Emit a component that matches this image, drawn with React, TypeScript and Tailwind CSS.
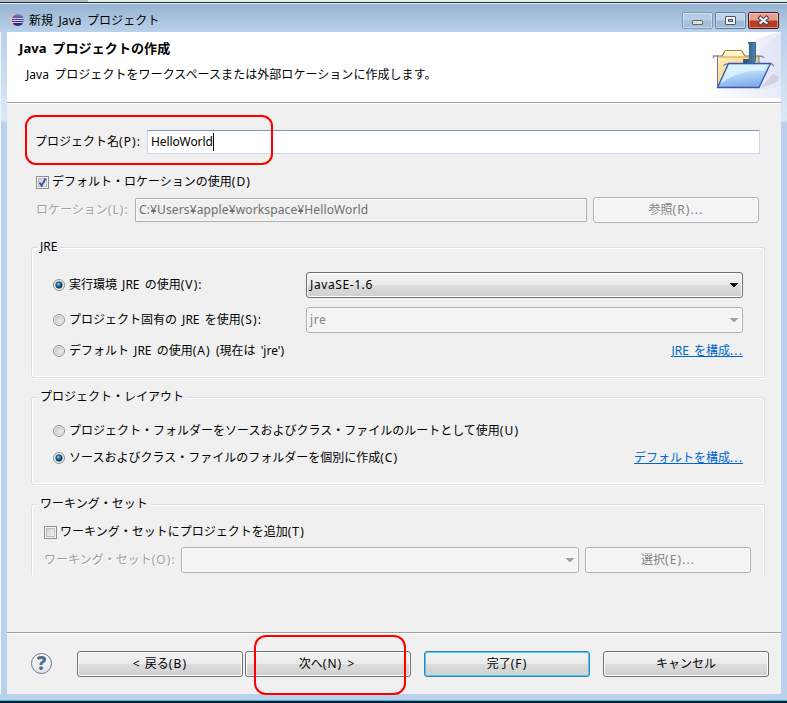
import type { ReactNode } from 'react';
import clsx from 'clsx';

function EclipseIcon() {
  return (
    <svg width="14" height="14" viewBox="0 0 14 14" className="shrink-0">
      <defs>
        <linearGradient id="ball" x1="0" y1="0" x2="0" y2="1">
          <stop offset="0" stopColor="#8a86c4" />
          <stop offset="0.5" stopColor="#3a3488" />
          <stop offset="1" stopColor="#2b2370" />
        </linearGradient>
      </defs>
      <ellipse cx="5.5" cy="7" rx="5.5" ry="6" fill="#e6b9b4" />
      <circle cx="7.8" cy="7" r="6.1" fill="url(#ball)" />
      <path d="M2 5.500h11.800M1.500 7.500h12.400M2 9.500h11.500" stroke="#e6e3f8" strokeWidth="0.900" />
    </svg>
  );
}

function CaptionButton({ kind }: { kind: 'min' | 'max' | 'close' }) {
  return (
    <div
      className={clsx(
        'h-[17px] w-[31px] rounded-[2px] border',
        kind === 'close'
          ? 'border-[#4a1420] bg-linear-to-b from-[#e6a08f] from-45% to-[#b83a22] to-55%'
          : kind === 'max'
            ? 'border-[#5f7a99] bg-linear-to-b from-[#bfd3e8] from-45% to-[#9fbbd8] to-55%'
            : 'border-[#7d98b6] bg-linear-to-b from-[#b5cce4] from-45% to-[#a4c0dd] to-55%',
      )}
    >
      <svg width="29" height="15" viewBox="0 0 29 15" className="block rounded-[1px] shadow-[inset_0_0_0_1px_rgba(255,255,255,0.4)]">
        {kind === 'min' && <rect x="9.5" y="7.5" width="10" height="4" rx="0.5" fill="#e3e0d8" stroke="#5f6670" />}
        {kind === 'max' && (
          <>
            <rect x="9.5" y="3.5" width="10" height="8" rx="0.5" fill="#f4f4f4" stroke="#4e5866" />
            <rect x="12.5" y="6.5" width="4" height="2" fill="#9fbbd8" stroke="#4e5866" />
          </>
        )}
        {kind === 'close' && (
          <>
            <path d="M11.5 5l6 5M17.5 5l-6 5" stroke="#4b3f4a" strokeWidth="4.2" strokeLinecap="square" />
            <path d="M11.5 5l6 5M17.5 5l-6 5" stroke="#f4f2f2" strokeWidth="2.200" strokeLinecap="square" />
          </>
        )}
      </svg>
    </div>
  );
}

function FolderBanner() {
  return (
    <svg width="75" height="66" viewBox="706 32 75 66" className="block">
      <defs>
        <linearGradient id="sky" x1="0" y1="0" x2="1" y2="0">
          <stop offset="0" stopColor="#fff" />
          <stop offset="1" stopColor="#dfe4f6" />
        </linearGradient>
        <linearGradient id="front" x1="0" y1="0" x2="0.3" y2="1">
          <stop offset="0" stopColor="#c9ecfd" />
          <stop offset="0.45" stopColor="#b9dffb" />
          <stop offset="1" stopColor="#83aeeb" />
        </linearGradient>
        <linearGradient id="back" x1="0" y1="0" x2="1" y2="1">
          <stop offset="0" stopColor="#fff3c6" />
          <stop offset="1" stopColor="#edbf62" />
        </linearGradient>
        <linearGradient id="jay" x1="0" y1="0" x2="1" y2="0">
          <stop offset="0" stopColor="#1f4d79" />
          <stop offset="1" stopColor="#4d87b0" />
        </linearGradient>
      </defs>
      <path d="M706 98c28-3 22-60 75-66v66z" fill="url(#sky)" opacity="0.75" />
      <path d="M755 64c4-14 13-23 26-30v52c-9 3-17 4-26 4z" fill="#d9dff4" opacity="0.4" />
      <path d="M761 87l12-13c5 2 8 4 4 7-3 3-9 5-16 6z" fill="#b3a6b5" opacity="0.35" />
      <path d="M717.5 87V56h4.500l3-5h17l3 5h14v24z" fill="url(#back)" stroke="#77719a" />
      <path d="M722 56.500l3-6h16.500l3.500 6" fill="#fff3c9" stroke="#a78442" />
      <path d="M719 57h39" stroke="#c9a55a" />
      <path d="M713.500 58v-2h5M763.500 58q0-2-5-2" fill="none" stroke="#8f8994" strokeWidth="1.500" />
      <path d="M748.500 42.500h7v16c0 4-2 6-5 6H743.500v-5h4c1.300 0 2-.5 2-2V43.500h-1z" fill="url(#jay)" stroke="#234b70" strokeWidth="0.800" />
      <path d="M724 66q0-2 4-2M773.500 66.500q0-3-5-3" fill="none" stroke="#8f8994" strokeWidth="1.500" />
      <path d="M728.500 63.500h42l-11.500 24h-41.500z" fill="url(#front)" stroke="#3b57ad" strokeWidth="1.300" />
      <path d="M729.500 65h38l-3 6c-18-1-32 4-41 11l-3 1z" fill="#e9f9ff" opacity="0.65" />
    </svg>
  );
}

function HelpIcon() {
  return (
    <div className="-mt-px flex size-[21px] shrink-0 items-center justify-center rounded-full border border-[#65758e] bg-linear-to-b from-[#fafbfc] to-[#e3e6ea] text-[19px] leading-[19px] font-black text-[#586b8a] [font-family:'Open_Sans','Noto_Sans',sans-serif]">
      ?
    </div>
  );
}

function Arrow({ muted }: { muted?: boolean }) {
  return (
    <svg width="8" height="4" viewBox="0 0 8 4" className="shrink-0" shapeRendering="crispEdges">
      <path d="M0 0h8v1H7v1H6v1H5v1H3V3H2V2H1V1H0z" fill={muted ? '#a3a3a3' : '#000'} />
    </svg>
  );
}

function Radio({ on }: { on?: boolean }) {
  return (
    <svg width="12" height="12" viewBox="0 0 12 12" className="shrink-0">
      <defs>
        <linearGradient id="well" x1="0" y1="0" x2="1" y2="1">
          <stop offset="0" stopColor="#c3c7cc" />
          <stop offset="1" stopColor="#f6f6f6" />
        </linearGradient>
        <radialGradient id="dot" cx="0.4" cy="0.35" r="0.65">
          <stop offset="0" stopColor="#7fdcf8" />
          <stop offset="0.45" stopColor="#1c7db0" />
          <stop offset="1" stopColor="#0c2c4c" />
        </radialGradient>
      </defs>
      <circle cx="6" cy="6" r="5.5" fill="#f6f6f6" stroke="#8e8f8f" />
      <circle cx="6" cy="6" r="3.9" fill="url(#well)" stroke="#b8bdc3" strokeWidth="0.6" />
      {on && <circle cx="6" cy="6" r="3.2" fill="url(#dot)" stroke="#17344f" strokeWidth="0.6" />}
    </svg>
  );
}

function CheckBox({ on }: { on?: boolean }) {
  return (
    <svg width="13" height="13" viewBox="0 0 13 13" className="shrink-0">
      <defs>
        <linearGradient id="box" x1="0" y1="0" x2="1" y2="1">
          <stop offset="0" stopColor="#cbcfd5" />
          <stop offset="1" stopColor="#f6f6f6" />
        </linearGradient>
      </defs>
      <rect x="0.5" y="0.5" width="12" height="12" fill="#f4f4f4" stroke="#8e8f8f" />
      <rect x="2.5" y="2.5" width="8" height="8" fill="url(#box)" stroke="#b9bec5" />
      {on && <path d="M3.5 6.5l2.200 3.200L9.500 2.500" fill="none" stroke="#3f4f95" strokeWidth="1.900" />}
    </svg>
  );
}

/* Caption text; mnemonics such as "(P):" and trailing dots are set a little wider. */
function Caption({ text }: { text: string }) {
  return (
    <>
      {text.split(/(\([A-Z]\):?|\.\.\.)/).map((part, i) =>
        i % 2 === 1 ? (
          <span key={i} className="tracking-[1.1px]">
            {part}
          </span>
        ) : (
          part
        ),
      )}
    </>
  );
}

function Choice({ on, box, text }: { on?: boolean; box?: boolean; text: string }) {
  return (
    <div className="flex h-5 items-center">
      {box ? <CheckBox on={on} /> : <Radio on={on} />}
      <span className={clsx('leading-5', box ? 'ml-[3px]' : 'ml-1')}>
        <Caption text={text} />
      </span>
    </div>
  );
}

const RAISED = 'bg-linear-to-b from-[#f3f3f3] from-0% via-[#ebebeb] via-50% to-[#cfcfcf]';

function Button({ look = 'normal', className, text }: { look?: 'normal' | 'default' | 'disabled'; className?: string; text: string }) {
  return (
    <div
      className={clsx(
        'flex h-[26px] w-[166px] shrink-0 items-center justify-center rounded-[3px] border leading-6',
        look === 'disabled' && 'border-[#adb2b5] bg-[#f4f4f4] text-[#838383] shadow-[inset_0_0_0_1px_#fcfcfc]',
        look === 'normal' && 'border-[#707070] shadow-[inset_0_0_0_1px_#fcfcfc]',
        look === 'default' && 'border-[#3c7fb1] shadow-[inset_0_0_0_1px_#45d0f5]',
        look !== 'disabled' && 'bg-[linear-gradient(#f2f2f2,#ebebeb_48%,#dddddd_50%,#cfcfcf)]',
        className,
      )}
    >
      <span>
        <Caption text={text} />
      </span>
    </div>
  );
}

function Combo({ muted, className, children }: { muted?: boolean; className: string; children?: ReactNode }) {
  return (
    <div
      className={clsx(
        'flex h-[26px] items-center justify-between rounded-[3px] border pr-1 pl-[3px] leading-6 shadow-[inset_0_0_0_1px_#fcfcfc]',
        muted
          ? 'border-[#adb2b5] bg-[#f4f4f4] text-[#838383]'
          : 'border-[#707070] bg-[linear-gradient(#f2f2f2,#ebebeb_48%,#dddddd_50%,#cfcfcf)]',
        className,
      )}
    >
      <span className="tracking-[0.6px]">{children}</span>
      <Arrow muted={muted} />
    </div>
  );
}

function Group({ title, open, className, children }: { title: string; open?: boolean; className: string; children: ReactNode }) {
  return (
    <section
      className={clsx(
        'ml-6 w-[734px] border border-[#d5dfe5]',
        open ? 'rounded-t-[3px] border-b-0 shadow-[inset_1px_1px_0_#fff,inset_-1px_0_0_#fff]' : 'rounded-[3px] shadow-[inset_0_0_0_1px_#fff,0_1px_0_#fff]',
        className,
      )}
    >
      <div className="-mt-[11px] ml-[5px] h-5 w-fit bg-[#f0f0f0] px-[3px] leading-5">{title}</div>
      {children}
    </section>
  );
}

export default function App() {
  return (
    <div className="relative flex h-[703px] w-[787px] flex-col overflow-hidden bg-[#b9d1ea] text-[12px] whitespace-nowrap text-black [font-family:'Noto_Sans','Noto_Sans_CJK_JP',sans-serif] [word-spacing:2px]">
      <div className="h-[2px] bg-[#e9eced]">
        <div className="h-full w-[88px] bg-[#b3bcc2]" />
      </div>
      <div className="h-px bg-[#252c33]" />
      <div className="h-px bg-[#dcebf7]" />
      <header className="flex h-7 items-start justify-between bg-linear-to-b from-[#98b4d2] to-[#b9d1ea] pr-2 pl-[10px]">
        <div className="flex items-start pt-[9px]">
          <EclipseIcon />
          <h1 className="-mt-px ml-[5px] h-[18px] leading-[18px] tracking-[0.1px]">新規 Java プロジェクト</h1>
        </div>
        <div className="flex gap-[2px] pt-2">
          <CaptionButton kind="min" />
          <CaptionButton kind="max" />
          <CaptionButton kind="close" />
        </div>
      </header>
      <div className="flex h-[662px] border-l border-[#f0f6fb]">
        <div className="w-[6px] bg-linear-to-b from-[#b9d1ea] via-[#dbe9f7] via-[88px] to-[#b9d1ea] to-[91px]" />
        <main className="flex w-[774px] flex-col bg-[#f0f0f0]">
          <div className="flex h-[70px] justify-between bg-white">
            <div className="pl-3">
              <h2 className="mt-[6px] h-5 text-[13px] leading-5 font-bold tracking-[0.12px]">Java プロジェクトの作成</h2>
              <p className="mt-[7px] ml-[7px] h-5 leading-5 tracking-[0.05px]">Java プロジェクトをワークスペースまたは外部ロケーションに作成します。</p>
            </div>
            <FolderBanner />
          </div>
          <div className="h-[2px] shrink-0 border-t border-[#a0a0a0] bg-white" />

          <div className="mt-[26px] ml-[29px] flex h-6 items-center">
            <label className="-ml-px w-[112px] leading-5">
              <Caption text="プロジェクト名(P):" />
            </label>
            <div className="flex h-6 w-[613px] items-center rounded-[1px] border border-[#c5daed] border-t-[#7a9bbb] bg-white pl-[3px]">
              <span className="leading-5 tracking-[-0.1px]">HelloWorld</span>
              <span className="h-[18px] w-px bg-black" />
            </div>
          </div>
          <div className="mt-[18px] ml-[29px]">
            <Choice on box text="デフォルト・ロケーションの使用(D)" />
          </div>
          <div className="mt-[5px] ml-[29px] flex h-[26px] items-center">
            <label className="w-[99px] leading-5 text-[#a0a0a0] [text-shadow:1px_1px_0_#fff]">
              <Caption text="ロケーション(L):" />
            </label>
            <div className="mr-[6px] flex h-6 w-[452px] items-center rounded-[1px] border border-[#afafaf] pl-[3px] leading-5 tracking-[0.13px] text-[#6d6d6d] shadow-[inset_0_0_0_1px_#f8f8f8]">
              C:¥Users¥apple¥workspace¥HelloWorld
            </div>
            <Button look="disabled" text="参照(R)..." />
          </div>

          <Group title="JRE" className="mt-6 h-[131px]">
            <div className="mt-[15px] ml-[21px] flex h-[26px] items-center">
              <div className="w-[253px]">
                <Choice on text="実行環境 JRE の使用(V):" />
              </div>
              <Combo className="w-[437px]">JavaSE-1.6</Combo>
            </div>
            <div className="mt-[9px] ml-[21px] flex h-[26px] items-center">
              <div className="w-[253px]">
                <Choice text="プロジェクト固有の JRE を使用(S):" />
              </div>
              <Combo muted className="w-[437px]">jre</Combo>
            </div>
            <div className="mt-2 mr-[21px] ml-[21px] flex h-5 items-center justify-between">
              <Choice text="デフォルト JRE の使用(A) (現在は 'jre')" />
              <a className="leading-5 text-[#0066cc] underline">
                <Caption text="JRE を構成..." />
              </a>
            </div>
          </Group>

          <Group title="プロジェクト・レイアウト" className="mt-[19px] h-[88px]">
            <div className="mt-[14px] ml-[21px]">
              <Choice text="プロジェクト・フォルダーをソースおよびクラス・ファイルのルートとして使用(U)" />
            </div>
            <div className="mt-[7px] mr-[21px] ml-[21px] flex h-5 items-center justify-between">
              <Choice on text="ソースおよびクラス・ファイルのフォルダーを個別に作成(C)" />
              <a className="leading-5 text-[#0066cc] underline">
                <Caption text="デフォルトを構成..." />
              </a>
            </div>
          </Group>

          <Group title="ワーキング・セット" open className="mt-[19px] h-[71px]">
            <div className="mt-2 ml-3">
              <Choice box text="ワーキング・セットにプロジェクトを追加(T)" />
            </div>
            <div className="mt-[5px] ml-3 flex h-[26px] items-center">
              <label className="w-[137px] leading-5 text-[#a0a0a0] [text-shadow:1px_1px_0_#fff]">
                <Caption text="ワーキング・セット(O):" />
              </label>
              <Combo muted className="mr-[6px] w-[398px]" />
              <Button look="disabled" text="選択(E)..." />
            </div>
          </Group>

          <footer className="mt-[57px] h-[62px] border-t border-[#a0a0a0] shadow-[inset_0_1px_0_#fff]">
            <div className="mt-[18px] ml-6 flex h-[26px] items-center">
              <HelpIcon />
              <Button className="ml-[25px]" text="< 戻る(B)" />
              <Button className="ml-[2px] pr-[3px]" text="次へ(N) >" />
              <Button look="default" className="ml-[13px]" text="完了(F)" />
              <Button className="ml-[13px]" text="キャンセル" />
            </div>
          </footer>
        </main>
        <div className="w-[6px] bg-linear-to-b from-[#b9d1ea] via-[#dbe9f7] via-[88px] to-[#b9d1ea] to-[91px]" />
      </div>
      <div className="mt-[6px] h-px bg-[#1fc5e0]" />
      <div className="h-[2px] bg-[#06152f]" />

      {/* Callouts around the name field and the Next button */}
      <div className="absolute top-[115px] left-[25px] h-[50px] w-[248px] rounded-[11px] border-2 border-[#ff0000]" />
      <div className="absolute top-[635px] left-[254px] h-[60px] w-[152px] rounded-[12px] border-2 border-[#ff0000]" />
    </div>
  );
}
